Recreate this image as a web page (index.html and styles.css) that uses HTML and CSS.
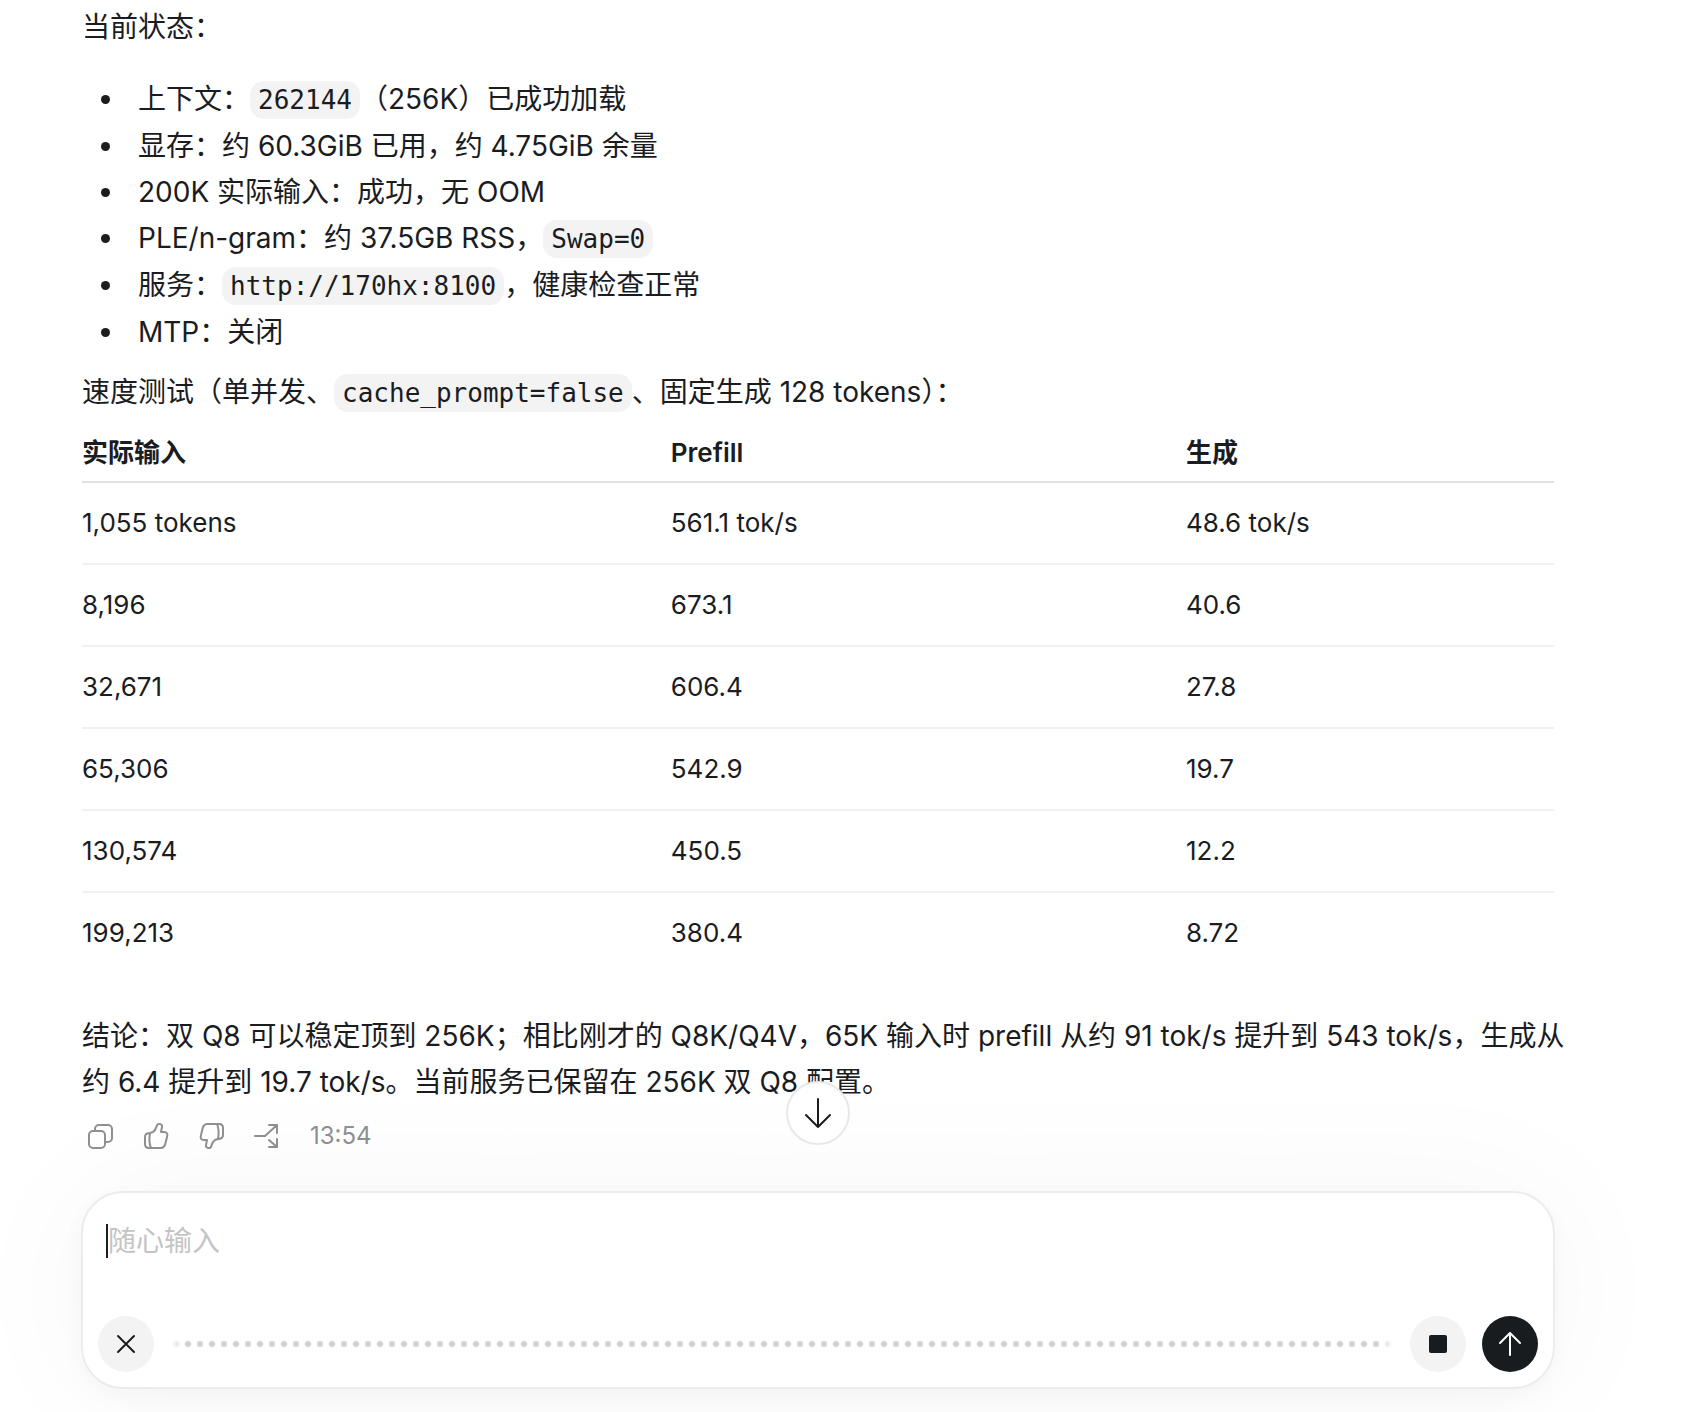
FILE: index.html
```html
<!DOCTYPE html>
<html lang="zh-CN">
<head>
    <meta charset="UTF-8">
    <meta name="viewport" content="width=device-width, initial-scale=1.0">
    <title>当前状态</title>
    <link rel="stylesheet" href="styles.css">
</head>
<body>
    <main class="chat">
        <article class="message">
            <p>当前状态：</p>
            <ul>
                <li>上下文：<code>262144</code>（256K）已成功加载</li>
                <li>显存：约 60.3GiB 已用，约 4.75GiB 余量</li>
                <li>200K 实际输入：成功，无 OOM</li>
                <li>PLE/n-gram：约 37.5GB RSS，<code>Swap=0</code></li>
                <li>服务：<code>http://170hx:8100</code>，健康检查正常</li>
                <li>MTP：关闭</li>
            </ul>
            <p>速度测试（单并发、<code>cache_prompt=false</code>、固定生成 128 tokens）：</p>
            <table>
                <thead>
                    <tr><th>实际输入</th><th>Prefill</th><th>生成</th></tr>
                </thead>
                <tbody>
                    <tr><td>1,055 tokens</td><td>561.1 tok/s</td><td>48.6 tok/s</td></tr>
                    <tr><td>8,196</td><td>673.1</td><td>40.6</td></tr>
                    <tr><td>32,671</td><td>606.4</td><td>27.8</td></tr>
                    <tr><td>65,306</td><td>542.9</td><td>19.7</td></tr>
                    <tr><td>130,574</td><td>450.5</td><td>12.2</td></tr>
                    <tr><td>199,213</td><td>380.4</td><td>8.72</td></tr>
                </tbody>
            </table>
            <p>结论：双 Q8 可以稳定顶到 256K；相比刚才的 Q8K/Q4V，65K 输入时 prefill 从约 91 tok/s 提升到 543 tok/s，生成从约 6.4 提升到 19.7 tok/s。当前服务已保留在 256K 双 Q8 配置。</p>
        </article>

        <div class="actions">
            <button type="button" aria-label="复制">
                <svg viewBox="0 0 28 28"><rect x="3" y="9" width="16" height="17" rx="4"/><path d="M9 9V7a4 4 0 0 1 4-4h9a4 4 0 0 1 4 4v9a4 4 0 0 1-4 4h-3"/></svg>
            </button>
            <button type="button" aria-label="赞">
                <svg viewBox="0 0 28 28"><path d="M8 11l3-1c3-2 3-4 4-7 1-2 6-1 5 2l-1 5h3c3 0 4 2 3 5l-2 8c-1 2-2 3-4 3H7c-3 0-4-2-4-4v-7c0-2 1-4 5-4zM8 11c-1 5-1 10 1 15"/></svg>
            </button>
            <button type="button" aria-label="踩">
                <svg viewBox="0 0 28 28"><path transform="rotate(180 14 14)" d="M8 11l3-1c3-2 3-4 4-7 1-2 6-1 5 2l-1 5h3c3 0 4 2 3 5l-2 8c-1 2-2 3-4 3H7c-3 0-4-2-4-4v-7c0-2 1-4 5-4zM8 11c-1 5-1 10 1 15"/></svg>
            </button>
            <button type="button" aria-label="分支">
                <svg viewBox="0 0 28 28"><path d="M1 14h10L23 3M15 3h8v8M15 18l8 7M23 17v8h-8"/></svg>
            </button>
            <time>13:54</time>
        </div>

        <form class="composer">
            <button type="button" class="scroll-down" aria-label="滚动到底部">
                <svg viewBox="0 0 32 32"><path d="M16 2v28M4 18l12 12 12-12"/></svg>
            </button>
            <div class="field">
                <span class="caret"></span>
                <textarea rows="1" placeholder="随心输入" aria-label="随心输入"></textarea>
            </div>
            <div class="toolbar">
                <button type="button" class="round" aria-label="取消">
                    <svg viewBox="0 0 32 32"><path d="M8 8l16 16M24 8L8 24"/></svg>
                </button>
                <div class="wave"></div>
                <button type="button" class="round" aria-label="停止"><span class="stop"></span></button>
                <button type="submit" class="round send" aria-label="发送">
                    <svg viewBox="0 0 32 32"><path d="M16 27V5M6 15L16 5l10 10"/></svg>
                </button>
            </div>
        </form>
    </main>
</body>
</html>
```
FILE: styles.css
```css
* {
    margin: 0;
    padding: 0;
    box-sizing: border-box;
}
body {
    font-family: Inter, "Noto Sans CJK SC", sans-serif;
    font-size: 28px;
    line-height: 46px;
    color: #1a1c1f;
    background-color: #fff;
    overflow-x: hidden;
}
button {
    border: none;
    background: none;
    color: inherit;
    cursor: pointer;
}
svg {
    display: block;
    fill: none;
    stroke: currentColor;
    stroke-width: 2;
    stroke-linecap: round;
    stroke-linejoin: round;
}
.chat {
    padding: 4px 142px 23px 82px;
}
.message p {
    margin-right: -16px;
}
.message ul {
    margin: 26px 0 14px;
    padding-left: 44px;
}
.message li {
    padding-left: 12px;
}
code {
    font-family: "DejaVu Sans Mono", monospace;
    font-size: 26px;
    padding: 4px 8px;
    border-radius: 14px;
    background-color: #f3f3f3;
}
table {
    width: 100%;
    margin-bottom: 40px;
    table-layout: fixed;
    border-collapse: collapse;
    font-size: 26px;
}
th {
    padding: 14px 0 5px;
    text-align: left;
    font-weight: 600;
    border-bottom: 2px solid #e3e3e3;
}
th:nth-child(1) {
    width: 40%;
}
th:nth-child(2) {
    width: 35%;
}
td {
    padding: 17px 0;
    border-bottom: 2px solid #f1f1f1;
}
tr:last-child td {
    border-bottom: none;
}
.actions {
    display: flex;
    align-items: center;
    gap: 28px;
    padding: 8px 4px;
    color: #8f9191;
}
.actions svg {
    width: 28px;
    height: 28px;
}
.actions time {
    font-size: 24px;
}
.composer {
    position: relative;
    margin: 24px -1px 0;
    padding: 15px;
    border: 2px solid #ececec;
    border-radius: 42px;
    background-color: #fff;
    box-shadow: 0 8px 24px rgba(0, 0, 0, 0.03), 0 0 140px rgba(0, 0, 0, 0.04);
}
.scroll-down {
    position: absolute;
    bottom: calc(100% + 48px);
    left: 50%;
    width: 64px;
    height: 64px;
    padding: 14px;
    transform: translateX(-50%);
    border: 2px solid #e8e8e8;
    border-radius: 50%;
    background-color: #fff;
}
.field {
    display: flex;
    align-items: center;
    height: 66px;
    margin-bottom: 42px;
    padding-left: 8px;
}
.caret {
    width: 2px;
    height: 34px;
    background-color: #1a1c1f;
}
textarea {
    flex: 1;
    height: 46px;
    border: none;
    outline: none;
    resize: none;
    font: inherit;
    background: none;
}
textarea::placeholder {
    color: #c4c4c4;
}
.toolbar {
    display: flex;
    align-items: center;
    gap: 16px;
}
.round {
    display: flex;
    align-items: center;
    justify-content: center;
    width: 56px;
    height: 56px;
    border-radius: 50%;
    background-color: #f3f3f3;
}
.round svg {
    width: 32px;
    height: 32px;
}
.stop {
    width: 18px;
    height: 18px;
    border-radius: 2px;
    background-color: #181c1e;
}
.send {
    color: #fff;
    background-color: #181c1e;
}
.wave {
    flex: 1;
    height: 12px;
    background: radial-gradient(circle, #cfcfcf 2px, transparent 4px) 0 0 / 12px 12px;
    mask-image: linear-gradient(90deg, transparent, #000 16px, #000 calc(100% - 16px), transparent);
}
```
